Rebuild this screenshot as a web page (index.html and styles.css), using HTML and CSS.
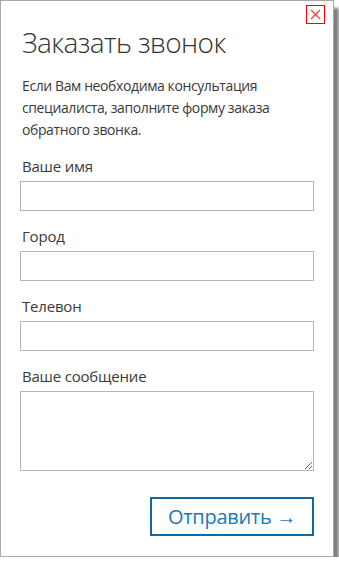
FILE: index.html
```html
<!DOCTYPE html>
<html lang="ru">
<head>
    <meta charset="UTF-8">
    <meta name="viewport" content="width=device-width, initial-scale=1.0">
    <title>Заказать звонок</title>
    <link rel="stylesheet" href="styles.css">
</head>
<body>
    <!-- Callback popup -->
    <div class="popup">
        <a href="#" class="popup-close" title="Закрыть">
            <svg width="11" height="11" viewBox="0 0 11 11">
                <path d="M1 1 L10 10 M10 1 L1 10" stroke="#ff3b3b" stroke-width="1.2" fill="none"/>
            </svg>
        </a>
        <h2>Заказать звонок</h2>
        <p class="popup-text">Если Вам необходима консультация специалиста, заполните форму заказа обратного звонка.</p>
        <form id="callbackForm">
            <div class="form-group">
                <label for="name">Ваше имя</label>
                <input type="text" id="name" name="name">
            </div>
            <div class="form-group">
                <label for="city">Город</label>
                <input type="text" id="city" name="city">
            </div>
            <div class="form-group">
                <label for="phone">Телевон</label>
                <input type="text" id="phone" name="phone">
            </div>
            <div class="form-group">
                <label for="message">Ваше сообщение</label>
                <textarea id="message" name="message"></textarea>
            </div>
            <div class="form-actions">
                <button type="submit">Отправить &rarr;</button>
            </div>
        </form>
    </div>
</body>
</html>
```

FILE: styles.css
```css
body {
    font-family: "Open Sans", Arial, sans-serif;
    margin: 0;
    padding: 0;
    background: #fff;
    color: #3a3a3a;
}
.popup {
    position: relative;
    width: 334px;
    height: 557px;
    box-sizing: border-box;
    border: 1px solid #a9a9a9;
    padding: 0 19px;
    background: #fff;
    box-shadow: 5px 8px 3px rgba(0, 0, 0, 0.5);
}
.popup-close {
    position: absolute;
    top: 4px;
    right: 8px;
    width: 19px;
    height: 19px;
    box-sizing: border-box;
    border: 1px solid #f00;
    display: flex;
    align-items: center;
    justify-content: center;
}
.popup h2 {
    margin: 0;
    padding-top: 22px;
    font-size: 28px;
    font-weight: 300;
    line-height: 38px;
    letter-spacing: -0.6px;
    color: #333;
    padding-left: 2px;
}
.popup-text {
    margin: 14px 0 0 2px;
    font-size: 14px;
    line-height: 22px;
    letter-spacing: -0.4px;
}
#callbackForm {
    margin-top: 10px;
}
.form-group {
    margin-bottom: 10px;
}
.form-group label {
    display: block;
    font-size: 15px;
    line-height: 30px;
    letter-spacing: -0.2px;
    padding-left: 2px;
}
.form-group input,
.form-group textarea {
    display: block;
    width: 100%;
    height: 30px;
    margin: 0;
    padding: 4px 6px;
    border: 1px solid #b5b5b5;
    border-radius: 0;
    box-sizing: border-box;
    font-family: inherit;
    font-size: 14px;
}
.form-group textarea {
    height: 80px;
    resize: vertical;
}
.form-actions {
    display: flex;
    justify-content: flex-end;
    margin-top: 26px;
}
.form-actions button {
    width: 164px;
    height: 39px;
    padding: 0;
    background: #fff;
    border: 2px solid #0e6aa3;
    border-radius: 0;
    color: #1a78b3;
    font-family: inherit;
    font-size: 20px;
    letter-spacing: -0.3px;
    cursor: pointer;
}
.form-actions button:hover {
    background: #f0f7fb;
}
```
